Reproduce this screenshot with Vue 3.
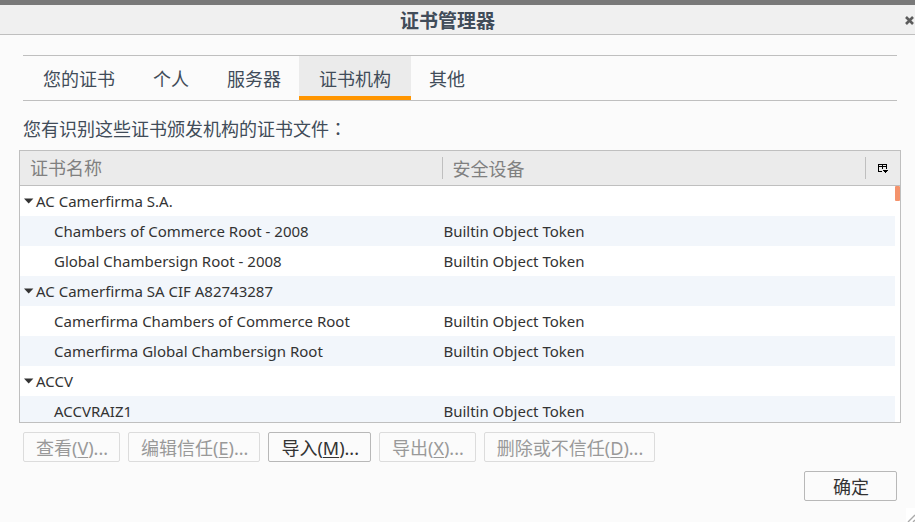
<script setup>
import { ref } from 'vue'

const tabs = ['您的证书', '个人', '服务器', '证书机构', '其他']
const activeTab = ref('证书机构')

const token = 'Builtin Object Token'
const rows = [
  { name: 'AC Camerfirma S.A.', group: true },
  { name: 'Chambers of Commerce Root - 2008', device: token },
  { name: 'Global Chambersign Root - 2008', device: token },
  { name: 'AC Camerfirma SA CIF A82743287', group: true },
  { name: 'Camerfirma Chambers of Commerce Root', device: token },
  { name: 'Camerfirma Global Chambersign Root', device: token },
  { name: 'ACCV', group: true },
  { name: 'ACCVRAIZ1', device: token }
]

const actions = [
  { label: '查看', key: 'V', disabled: true },
  { label: '编辑信任', key: 'E', disabled: true },
  { label: '导入', key: 'M', disabled: false },
  { label: '导出', key: 'X', disabled: true },
  { label: '删除或不信任', key: 'D', disabled: true }
]
</script>

<template>
  <div class="window">
    <header class="titlebar">
      <h1>证书管理器</h1>
      <button class="close" type="button" aria-label="关闭">
        <svg width="9" height="9" viewBox="0 0 9 9">
          <path d="M1 1L8 8M8 1L1 8" stroke="#5c5c5c" stroke-width="2.6" />
        </svg>
      </button>
    </header>

    <main class="content">
      <div class="tabs" role="tablist">
        <button
          v-for="tab in tabs"
          :key="tab"
          type="button"
          role="tab"
          class="tab"
          :class="{ selected: tab === activeTab }"
          :aria-selected="tab === activeTab"
          @click="activeTab = tab"
        >{{ tab }}</button>
      </div>

      <p id="tree-label" class="description">您有识别这些证书颁发机构的证书文件<span class="colon">：</span></p>

      <div class="tree">
        <table aria-labelledby="tree-label">
          <colgroup>
            <col class="col-name" />
            <col />
            <col class="col-picker" />
          </colgroup>
          <thead>
            <tr>
              <th scope="col"><div class="head">证书名称</div></th>
              <th scope="col"><div class="head divided">安全设备</div></th>
              <th>
                <div class="divided">
                  <button class="picker" type="button" aria-label="选择要显示的列">
                    <svg width="10" height="9" viewBox="0 0 10 9" shape-rendering="crispEdges">
                      <path
                        d="M0 0H9V5H8V3H5V5H4V3H1V7H4V8H0ZM1 1V2H4V1ZM5 1V2H8V1ZM5 6H10V7H9V8H8V9H7V8H6V7H5Z"
                        fill="#000" fill-rule="evenodd"
                      />
                    </svg>
                  </button>
                </div>
              </th>
            </tr>
          </thead>
          <tbody>
            <tr v-for="row in rows" :key="row.name">
              <td :class="row.group ? 'group' : 'leaf'">
                <svg v-if="row.group" class="twisty" width="10" height="6" viewBox="0 0 10 6">
                  <path d="M0 0.5H9.4L4.7 5.5Z" fill="#333" />
                </svg>{{ row.name }}
              </td>
              <td class="device">{{ row.device }}</td>
              <td></td>
            </tr>
          </tbody>
        </table>
        <div class="track"><div class="thumb"></div></div>
      </div>

      <div class="actions">
        <button
          v-for="action in actions"
          :key="action.key"
          type="button"
          class="button"
          :disabled="action.disabled"
        >{{ action.label }}(<u>{{ action.key }}</u>)...</button>
      </div>

      <footer class="footer">
        <button type="button" class="button confirm">确定</button>
      </footer>
    </main>

    <svg class="resizer" width="9" height="14" viewBox="0 0 9 14">
      <path d="M0 0H9V14H0Z" fill="#fff" />
      <path d="M2 14L9 7M7 14L9 12" stroke="#aaa" stroke-width="1.4" />
    </svg>
  </div>
</template>

<style>
body {
  margin: 0;
  background: #fbfbfb;
}
</style>

<style scoped>
.window {
  box-sizing: border-box;
  position: relative;
  display: flex;
  flex-direction: column;
  height: 100vh;
  border-top: 5px solid #797979;
  background: #fbfbfb;
  color: #414c59;
  font-family: "Noto Sans", "Noto Sans CJK SC", sans-serif;
  font-size: 18px;
}

button {
  margin: 0;
  font: inherit;
  color: inherit;
}

.titlebar {
  display: grid;
  grid-template-columns: 14px 1fr 14px;
  align-items: center;
  height: 29px;
  flex: none;
  border-bottom: 1px solid #bfbfbf;
  background: #f0f0f0;
}

.titlebar h1 {
  grid-column: 2;
  margin: 0;
  padding: 2px 20px 0 0;
  font-size: 19px;
  line-height: 29px;
  font-weight: 700;
  text-align: center;
}

.close {
  display: flex;
  justify-content: flex-end;
  padding: 0 1px;
  border: 0;
  background: none;
}

.content {
  display: flex;
  flex-direction: column;
  flex: 1;
  min-height: 0;
  padding: 20px 18px 21px 23px;
}

.tabs {
  display: flex;
  flex: none;
  height: 44px;
  border: solid #bfbfbf;
  border-width: 1px 0;
}

.tab {
  padding: 6px 18px 0 20px;
  border: 0;
  border-bottom: 4px solid transparent;
  background: none;
  line-height: 34px;
}

.tab.selected {
  padding-right: 20px;
  border-bottom-color: #ff9500;
  background: #ebebeb;
}

.selected + .tab {
  padding-left: 18px;
}

.description {
  margin: 0;
  padding: 13px 0 5px;
  line-height: 31px;
}

.colon {
  font-family: "Noto Sans CJK TC", sans-serif;
  line-height: 1;
}

.tree {
  position: relative;
  flex: 1;
  min-height: 0;
  margin: 0 -4px;
  border: 1px solid #bfbfbf;
  background: #fff;
  overflow: hidden;
}

table {
  width: 100%;
  table-layout: fixed;
  border-collapse: separate;
  border-spacing: 0;
}

.col-name {
  width: 48%;
}

.col-picker {
  width: 35px;
}

th {
  height: 34px;
  padding: 0;
  border-bottom: 1px solid #bfbfbf;
  background: #ebebeb;
  color: #808080;
  font-weight: 400;
  text-align: left;
}

.head {
  padding-left: 10px;
  line-height: 24px;
}

.divided {
  height: 22px;
  border-left: 1px solid #bfbfbf;
}

.head.divided {
  padding-left: 9px;
}

.picker {
  display: flex;
  align-items: center;
  justify-content: center;
  width: 100%;
  height: 22px;
  padding: 0;
  border: 0;
  background: none;
}

td {
  height: 30px;
  padding: 0;
  color: #333;
  font-size: 15px;
  line-height: 30px;
  white-space: nowrap;
}

tbody tr:nth-child(even) td {
  background: #f2f6fb;
}

.group {
  padding-left: 4px;
}

.leaf {
  padding-left: 34px;
}

.device {
  padding-left: 1px;
}

.twisty {
  margin-right: 2px;
  vertical-align: 3px;
}

.track {
  position: absolute;
  top: 35px;
  right: 0;
  bottom: 0;
  width: 5px;
  background: #fff;
}

.thumb {
  height: 15px;
  border-radius: 1px;
  background: #f4936c;
}

.actions {
  display: flex;
  flex: none;
  gap: 8px;
  padding: 9px 0;
}

.button {
  box-sizing: border-box;
  height: 30px;
  padding: 2px 11px 0 12px;
  border: 1px solid #b8b8b8;
  border-radius: 2px;
  background: #fbfbfb;
  color: #333;
  line-height: 26px;
  white-space: nowrap;
}

.button:disabled {
  border-color: #dcdcdc;
  color: #999;
}

.button u {
  text-underline-offset: 2px;
  text-decoration-thickness: 1px;
}

.footer {
  display: flex;
  flex: none;
  justify-content: flex-end;
}

.confirm {
  min-width: 93px;
}

.resizer {
  position: absolute;
  right: 0;
  bottom: 0;
}
</style>
